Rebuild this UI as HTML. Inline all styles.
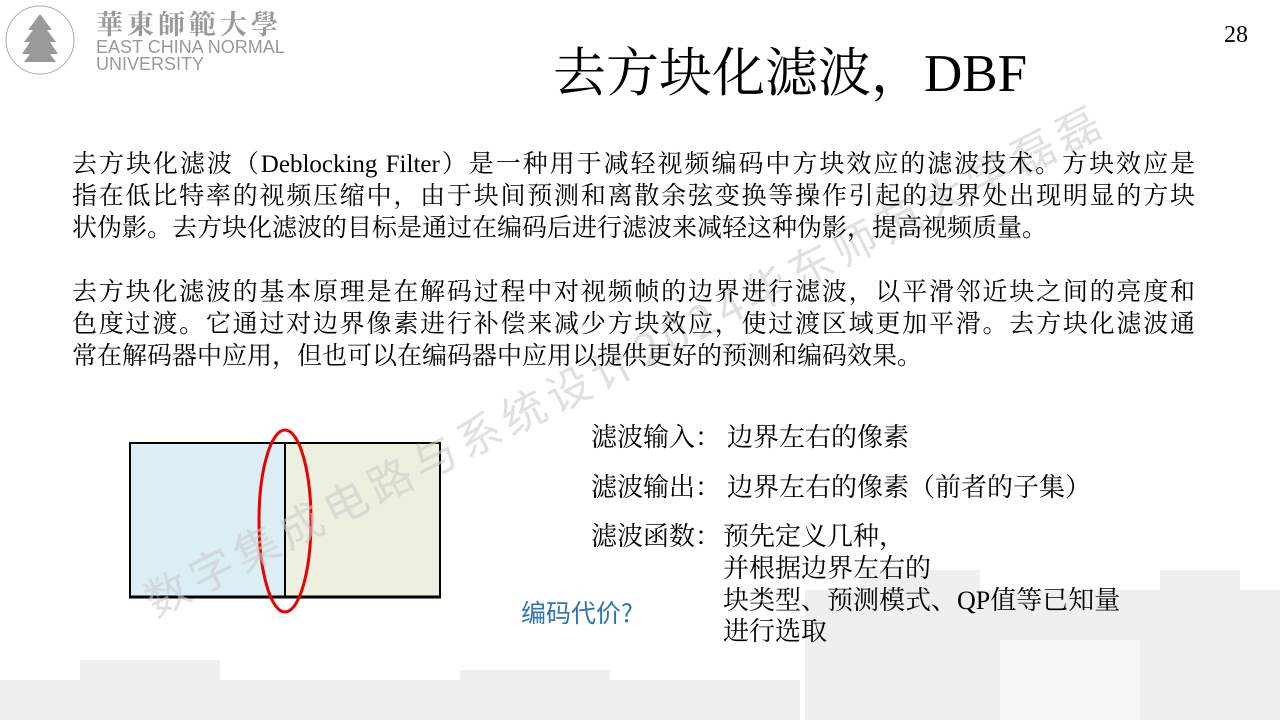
<!DOCTYPE html>
<html><head><meta charset="utf-8"><style>
body{margin:0;width:1280px;height:720px;overflow:hidden;background:#fff;position:relative;font-family:"Liberation Serif","Noto Serif CJK SC","Noto Sans CJK SC",serif;color:#000}
.a{position:absolute;white-space:nowrap}
.j{display:block;text-align:justify;text-align-last:justify;width:1123px;height:32px}
.l{display:block;height:32px}
</style></head><body>
<svg class="a" style="left:0;top:0" width="1280" height="720">
<g fill="#efefef">
<rect x="805" y="590" width="475" height="130"/>
<rect x="860" y="570" width="120" height="150"/>
<rect x="1160" y="570" width="80" height="150"/>
<rect x="80" y="660" width="140" height="60"/>
<rect x="0" y="680" width="800" height="40"/>
<rect x="460" y="670" width="150" height="50"/>
<rect x="570" y="690" width="230" height="30"/>
<rect x="300" y="690" width="120" height="30"/>
</g>
<g fill="#f6f6f6"><rect x="1000" y="640" width="140" height="80"/></g>
<rect x="129" y="442" width="156" height="156" fill="#dbeef4"/>
<rect x="285" y="442" width="156" height="156" fill="#ebf1de"/>
<rect x="130" y="443" width="310" height="154" fill="none" stroke="#000" stroke-width="2"/>
<line x1="129" y1="597" x2="441" y2="597" stroke="#000" stroke-width="3"/>
<line x1="285" y1="442" x2="285" y2="598" stroke="#000" stroke-width="2"/>
<ellipse cx="285" cy="521" rx="26" ry="91" fill="none" stroke="#e00" stroke-width="3"/>
<text x="155" y="618" transform="rotate(-27 155 618)" font-size="44" letter-spacing="6" fill="#cccccc" fill-opacity="0.6" font-family="Noto Sans CJK SC,sans-serif">数字集成电路与系统设计2024华东师范大学磊磊</text>
<g fill="#9a9a9a">
<circle cx="40" cy="40" r="34" fill="none" stroke="#aaa" stroke-width="1"/>
<path d="M40 14 L28 30 L33 30 L24 42 L30 42 L22 54 L30 54 L24 62 L56 62 L50 54 L58 54 L50 42 L56 42 L47 30 L52 30Z"/>
</g>
</svg>
<div class="a" style="left:96px;top:6px;font-size:27px;line-height:34px;color:#999;font-family:'Noto Serif CJK SC',serif;font-weight:bold;letter-spacing:4px">華東師範大學</div>
<div class="a" style="left:96px;top:39px;font-size:18px;color:#999;font-family:'Liberation Sans',sans-serif;line-height:17px">EAST CHINA NORMAL<br>UNIVERSITY</div>
<div class="a" style="left:1224px;top:22px;font-size:24px">28</div>
<div class="a" style="left:553px;top:41px;font-size:53px;line-height:66px">去方块化滤波，DBF</div>
<div class="a" style="left:72px;top:149px;font-size:25px;line-height:32px">
<span class="j">去方块化滤波（Deblocking Filter）是一种用于减轻视频编码中方块效应的滤波技术。方块效应是</span>
<span class="j">指在低比特率的视频压缩中，由于块间预测和离散余弦变换等操作引起的边界处出现明显的方块</span>
<span class="l">状伪影。去方块化滤波的目标是通过在编码后进行滤波来减轻这种伪影，提高视频质量。</span>
<span class="l"></span>
<span class="j">去方块化滤波的基本原理是在解码过程中对视频帧的边界进行滤波，以平滑邻近块之间的亮度和</span>
<span class="j">色度过渡。它通过对边界像素进行补偿来减少方块效应，使过渡区域更加平滑。去方块化滤波通</span>
<span class="l">常在解码器中应用，但也可以在编码器中应用以提供更好的预测和编码效果。</span>
</div>
<div class="a" style="left:591px;top:422px;font-size:26px;line-height:32px">滤波输入：</div>
<div class="a" style="left:727px;top:422px;font-size:26px;line-height:32px">边界左右的像素</div>
<div class="a" style="left:591px;top:472px;font-size:26px;line-height:32px">滤波输出：</div>
<div class="a" style="left:727px;top:472px;font-size:26px;line-height:32px">边界左右的像素（前者的子集）</div>
<div class="a" style="left:591px;top:521px;font-size:26px;line-height:32px">滤波函数：</div>
<div class="a" style="left:723px;top:521px;font-size:26px;line-height:32px">预先定义几种，</div>
<div class="a" style="left:723px;top:553px;font-size:26px;line-height:31.5px">并根据边界左右的<br>块类型、预测模式、QP值等已知量<br>进行选取</div>
<div class="a" style="left:521px;top:596px;font-size:25px;line-height:32px;color:#2e75b6;font-family:'Noto Sans CJK SC',sans-serif">编码代价?</div>
</body></html>
